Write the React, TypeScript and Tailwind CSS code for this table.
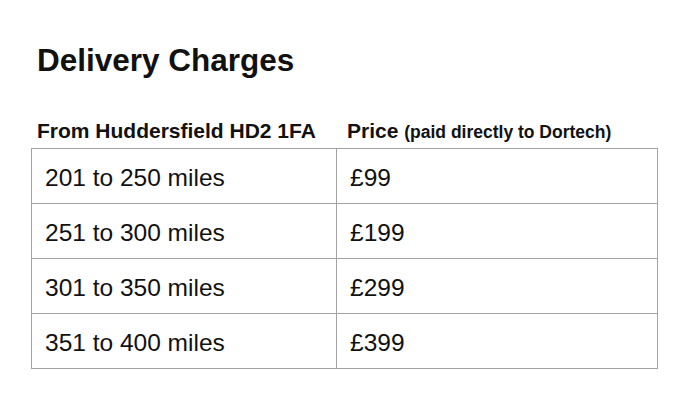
export default function App() {
  const rows = [
    ["201 to 250 miles", "£99"],
    ["251 to 300 miles", "£199"],
    ["301 to 350 miles", "£299"],
    ["351 to 400 miles", "£399"],
  ];
  return (
    <div
      className="w-[688px] h-[419px] bg-white text-[#111] overflow-hidden"
      style={{ fontFamily: '"Liberation Sans", Arial, sans-serif' }}
    >
      <div className="pl-[31px] w-[658px]">
        <h1 className="mt-[45px] ml-[6px] text-[31.5px] font-bold leading-none">Delivery Charges</h1>
        <div className="mt-[43px] grid grid-cols-[306px_1fr] font-bold leading-none">
          <div className="pl-[6px] text-[21px]">From Huddersfield HD2 1FA</div>
          <div className="pl-[10px] text-[21px]">
            Price <span className="text-[17.5px]">(paid directly to Dortech)</span>
          </div>
        </div>
        <div className="mt-[7px] border-l border-r border-t border-[#a3a3a3]">
          {rows.map(([a, b], i) => (
            <div key={i} className="grid grid-cols-[305px_1fr] h-[55px] border-b border-[#a3a3a3]">
              <div className="border-r border-[#a3a3a3] pl-[13px] pt-[17px] text-[24.5px] leading-none">{a}</div>
              <div className="pl-[13px] pt-[17px] text-[24.5px] leading-none">{b}</div>
            </div>
          ))}
        </div>
      </div>
    </div>
  );
}
